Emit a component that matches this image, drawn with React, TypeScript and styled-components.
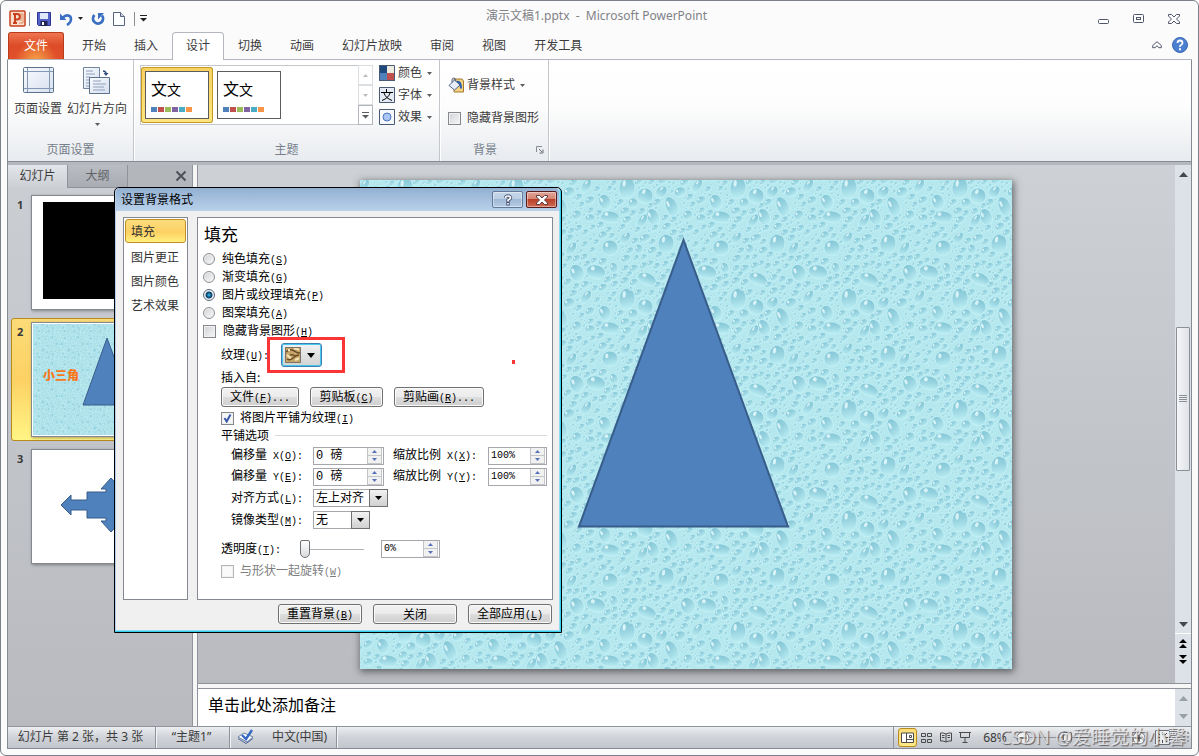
import React from "react";
import styled, { createGlobalStyle, css } from "styled-components";

const ui = `"Noto Sans", "Noto Sans CJK SC", sans-serif`;
const cjk = `"Noto Sans CJK SC", sans-serif`;
const song = `"Liberation Mono", "Noto Sans CJK SC", monospace`;

const Global = createGlobalStyle`
  *, *::before, *::after { box-sizing: border-box; }
  body { margin: 0; background: #fff; font: 12px/16px ${ui}; color: #3b3b3b; }
  button, input, select { font: inherit; color: inherit; margin: 0; }
  button { background: none; border: 0; padding: 0; }
  svg { display: block; flex: none; }
`;

/* ---------- window frame ---------- */

const Window = styled.div`
  position: relative;
  display: flex;
  flex-direction: column;
  min-height: 100vh;
  padding: 0 6px 6px;
  border: 1px solid #7c8089;
  border-radius: 6px;
  background: #fbfbfc;
  overflow: hidden;
`;

const TitleBar = styled.header`
  display: grid;
  grid-template-columns: 1fr auto 1fr;
  align-items: center;
  height: 31px;
  padding: 4px 8px 0 2px;
`;

const QuickBar = styled.div`
  display: flex;
  align-items: center;
  gap: 3px;
`;

const IconButton = styled.button<{ $w?: number }>`
  display: flex;
  align-items: center;
  justify-content: center;
  width: ${(p) => p.$w ?? 20}px;
  height: 20px;
`;

const Rule = styled.span`
  width: 1px;
  height: 14px;
  background: #8a8d92;
`;

const Caption = styled.h1`
  margin: 0;
  padding-bottom: 6px;
  font: 12px/16px ${ui};
  color: #7f8287;
  white-space: pre;
`;

const WindowButtons = styled.div`
  display: flex;
  justify-content: flex-end;
  gap: 15px;
`;

const TabRow = styled.nav`
  display: flex;
  align-items: stretch;
  height: 28px;
  padding-left: 1px;
  box-shadow: inset 0 -1px #b3b6bc;
`;

const FileTab = styled.button`
  width: 56px;
  height: 27px;
  margin-right: 4px;
  border: 1px solid #b93a1d;
  border-bottom: 0;
  border-radius: 3px 3px 0 0;
  background: radial-gradient(ellipse at 50% 110%, #f5a548 0, rgba(240, 130, 60, 0) 55%),
    linear-gradient(#ee7650, #dd4a27 50%, #e2512b);
  color: #fff;
`;

const Tab = styled.button<{ $on?: boolean }>`
  padding: 0 13px 2px;
  border: 1px solid transparent;
  border-bottom: 0;
  ${(p) =>
    p.$on &&
    css`
      border-color: #b3b6bc;
      border-radius: 4px 4px 0 0;
      background: #fff;
    `}
`;

const TabTools = styled.div`
  display: flex;
  align-items: center;
  gap: 5px;
  margin-left: auto;
  padding: 0 4px 2px 0;
`;

const Frame = styled.div`
  flex: 1;
  display: flex;
  flex-direction: column;
  border: 1px solid #868b93;
  border-top: 0;
`;

/* ---------- ribbon ---------- */

const Ribbon = styled.section`
  display: flex;
  height: 102px;
  border-bottom: 1px solid #868b93;
  background: linear-gradient(#fff, #fdfdfd 45%, #e8ebef);
`;

const Group = styled.div<{ $w: number }>`
  display: grid;
  grid-template-rows: 79px 22px;
  width: ${(p) => p.$w}px;
  border-right: 1px solid #c3c6cb;
  box-shadow: 1px 0 #fff;
`;

const GroupName = styled.div<{ $launch?: boolean }>`
  position: relative;
  display: flex;
  align-items: center;
  justify-content: center;
  padding-right: ${(p) => (p.$launch ? 18 : 0)}px;
  color: #767f8c;
`;

const Launcher = styled.button`
  position: absolute;
  right: 4px;
  top: 7px;
`;

const GroupBody = styled.div<{ $pad?: string; $gap?: number }>`
  display: flex;
  gap: ${(p) => p.$gap ?? 0}px;
  padding: ${(p) => p.$pad ?? "5px"};
`;

const BigButton = styled.button`
  display: flex;
  flex-direction: column;
  align-items: center;
  justify-content: flex-start;
  gap: 6px;
  line-height: 16px;
  white-space: nowrap;
`;

const Stack = styled.div<{ $gap?: number }>`
  display: flex;
  flex-direction: column;
  gap: ${(p) => p.$gap ?? 6}px;
`;

const SmallButton = styled.button`
  display: flex;
  align-items: center;
  gap: 3px;
  height: 16px;
  line-height: 16px;
  white-space: nowrap;
  & > svg:last-child { margin-left: 2px; }
`;

const Gallery = styled.div`
  display: flex;
  width: 233px;
  height: 60px;
  border: 1px solid #c4c7cc;
  background: #fff;
`;

const Theme = styled.button<{ $on?: boolean }>`
  display: flex;
  flex-direction: column;
  width: 72px;
  height: 56px;
  margin-top: 1px;
  padding: 4px;
  border-radius: 3px;
  ${(p) =>
    p.$on &&
    css`
      box-shadow: inset 0 0 0 1px #c29b2b;
      background: linear-gradient(#f8d160, #ffe57e);
    `}
`;

const ThemeCard = styled.span`
  display: flex;
  flex-direction: column;
  justify-content: flex-end;
  gap: 8px;
  width: 64px;
  height: 48px;
  padding: 0 5px 6px;
  border: 1px solid #5c5c5c;
  background: #fff;
  color: #000;
  text-align: left;
  font-size: 16px;
  line-height: 18px;
`;

const SmallGlyph = styled.span`
  font-size: 14px;
`;

const Swatches = styled.span`
  display: flex;
  gap: 1px;
`;

const Swatch = styled.i<{ $c: string }>`
  width: 6px;
  height: 5px;
  background: ${(p) => p.$c};
`;

const GallerySide = styled.div`
  display: flex;
  flex-direction: column;
  width: 15px;
  margin: -1px -1px -1px auto;
`;

const GalleryStep = styled.button<{ $on?: boolean }>`
  flex: 1;
  display: flex;
  align-items: center;
  justify-content: center;
  border: 1px solid ${(p) => (p.$on ? "#b3b7bd" : "#dcdfe2")};
`;

const RibbonCheck = styled.label`
  display: flex;
  align-items: center;
  gap: 6px;
  height: 16px;
  white-space: nowrap;
`;

/* ---------- form parts ---------- */

const Check = styled.input`
  appearance: none;
  flex: none;
  width: 13px;
  height: 13px;
  border: 1px solid #85898e;
  background: linear-gradient(135deg, #d0d2d5, #f7f7f8);
  box-shadow: inset 0 0 0 1px #f1f1f1;
  &:checked {
    background: #f4f6f8
      url("data:image/svg+xml,%3Csvg xmlns='http://www.w3.org/2000/svg' width='11' height='11'%3E%3Cpath d='M2.5 5l2.200 3.500L8.500 1.500' fill='none' stroke='%233a58a8' stroke-width='2'/%3E%3C/svg%3E");
  }
  &:disabled { border-color: #b4b6b8; background: #fafafa; }
`;

const Radio = styled.input`
  appearance: none;
  flex: none;
  width: 12px;
  height: 12px;
  border: 1px solid #8b8f94;
  border-radius: 50%;
  background: linear-gradient(135deg, #cfd1d4, #fafafa);
  box-shadow: inset 0 0 0 1px #f0f0f0;
  &:checked {
    border-color: #5a6b7d;
    background: radial-gradient(circle at 50% 50%, #46c3f0 0, #0f5e8f 2px, #123c5c 3px, #eef3f6 4px);
  }
`;

/* ---------- workspace ---------- */

const Workspace = styled.main`
  flex: 1;
  display: flex;
  border-top: 3px solid #b4b7bc;
`;

const Pane = styled.aside`
  width: 184px;
  background: linear-gradient(#cbced3, #b8babf);
`;

const PaneTabs = styled.div`
  display: flex;
  height: 23px;
  border-bottom: 1px solid #8f949c;
  background: #b3b6bb;
`;

const PaneTab = styled.button<{ $on?: boolean }>`
  width: 60px;
  height: ${(p) => (p.$on ? 23 : 22)}px;
  padding-bottom: 1px;
  border-right: 1px solid #8f949c;
  background: ${(p) => (p.$on ? "linear-gradient(#e2e5e9, #cbced3)" : "linear-gradient(#b9bcc1, #a9acb2)")};
  color: ${(p) => (p.$on ? "#3b3b3b" : "#5e6268")};
`;

const PaneClose = styled.button`
  margin: 0 5px 0 auto;
`;

const ThumbList = styled.ol`
  display: flex;
  flex-direction: column;
  gap: 4px;
  margin: 0;
  padding: 3px 3px 0;
  list-style: none;
`;

const ThumbItem = styled.li<{ $on?: boolean }>`
  display: grid;
  grid-template-columns: 16px auto;
  padding: 3px;
  height: 123px;
  border: 1px solid transparent;
  border-radius: 3px;
  font-weight: bold;
  font-size: 11px;
  line-height: 20px;
  & > span { padding-left: 2px; }
  & > svg { border: 1px solid #84888f; background: #fff; box-shadow: 1px 1px 3px rgba(0, 0, 0, 0.35); }
  ${(p) =>
    p.$on &&
    css`
      border-color: #b98a1c;
      background: linear-gradient(#fbdc78, #fdd164 50%, #fff585);
    `}
`;

const Splitter = styled.div`
  width: 6px;
  border: solid #8f949c;
  border-width: 0 1px;
  background: #f6f6f7;
`;

const Editor = styled.div`
  flex: 1;
  display: flex;
  flex-direction: column;
`;

const StageRow = styled.div`
  flex: 1;
  display: flex;
  background: linear-gradient(#cdd0d4, #b9bbc0);
`;

const Stage = styled.div`
  flex: 1;
  display: flex;
  align-items: center;
  justify-content: center;
  padding-right: 2px;
  & > svg { box-shadow: 1px 2px 7px 1px rgba(60, 62, 66, 0.7); }
`;

const ScrollColumn = styled.div`
  display: flex;
  flex-direction: column;
  width: 16px;
  background: #dde1e8;
`;

const ScrollButton = styled.button<{ $h?: number }>`
  display: flex;
  align-items: center;
  justify-content: center;
  height: ${(p) => p.$h ?? 18}px;
`;

const ScrollTrack = styled.div`
  flex: 1;
  display: flex;
  flex-direction: column;
  justify-content: center;
  padding: 0 1px;
`;

const ScrollThumb = styled.div`
  display: flex;
  align-items: center;
  justify-content: center;
  height: 144px;
  border: 1px solid #8a8f98;
  border-radius: 1px;
  background: linear-gradient(90deg, #f5f6f8, #dfe2e7);
`;

const PageButtons = styled.div`
  display: flex;
  flex-direction: column;
  height: 50px;
  border-top: 1px solid #fff;
`;

const RowSplitter = styled.div`
  height: 6px;
  border: solid #8f949c;
  border-width: 1px 0;
  background: #f6f6f7;
`;

const Notes = styled.div`
  display: flex;
  height: 37px;
  background: #fff;
  color: #000;
`;

const NotesText = styled.p`
  flex: 1;
  margin: 0;
  padding: 5px 10px;
  font-size: 16px;
  line-height: 22px;
`;

/* ---------- status bar ---------- */

const StatusBar = styled.footer`
  display: flex;
  align-items: center;
  height: 22px;
  border-top: 1px solid #8f949c;
  background: linear-gradient(#eceef0, #cfd2d7 50%, #c3c6cc);
`;

const StatusItem = styled.button<{ $w: number }>`
  display: flex;
  align-items: center;
  justify-content: center;
  gap: 17px;
  width: ${(p) => p.$w}px;
  height: 21px;
  padding: 0 2px 2px 0;
  border-right: 1px solid #8f949c;
  box-shadow: 1px 0 #f2f3f5;
  white-space: nowrap;
`;

const StatusTools = styled.div`
  display: flex;
  align-items: center;
  height: 21px;
  margin-left: auto;
  padding: 0 1px 0 4px;
  border-left: 1px solid #8f949c;
`;

const ViewButton = styled.button<{ $on?: boolean }>`
  display: flex;
  align-items: center;
  justify-content: center;
  width: 19px;
  height: 19px;
  border-radius: 3px;
  ${(p) =>
    p.$on &&
    css`
      border: 1px solid #b98a1c;
      background: linear-gradient(#fbdc78, #ffe987);
    `}
`;

const ZoomText = styled.button`
  width: 42px;
  text-align: center;
`;

const ZoomRange = styled.input`
  appearance: none;
  width: 102px;
  height: 14px;
  background: linear-gradient(#8f949c, #8f949c) center / 100% 1px no-repeat;
  &::-webkit-slider-thumb {
    appearance: none;
    width: 9px;
    height: 12px;
    border: 1px solid #74787e;
    border-radius: 1px 1px 4px 4px;
    background: #f2f3f4;
  }
`;

const Watermark = styled.div`
  position: absolute;
  right: 12px;
  bottom: 4px;
  color: rgba(240, 240, 242, 0.75);
  font: 19px/28px ${ui};
  text-shadow: 1px 1px 1px rgba(70, 70, 74, 0.8);
  pointer-events: none;
  white-space: nowrap;
`;

/* ---------- dialog ---------- */

const Dialog = styled.section`
  position: absolute;
  left: 113px;
  top: 186px;
  width: 448px;
  border: 1px solid #000;
  border-radius: 5px 5px 0 0;
  background: #f0f0f0;
  box-shadow: inset -1px -1px #35cdee, inset -2px -2px #8fdcf0, inset 1px 0 #b4d0ee;
  color: #000;
  font: 12px/16px ${cjk};
`;

const DialogTitle = styled.header`
  display: flex;
  align-items: flex-start;
  gap: 3px;
  height: 23px;
  margin: 0 2px 0 1px;
  padding: 3px 2px 0 5px;
  border-radius: 4px 4px 0 0;
  background: linear-gradient(#93b0d2, #b9d1ea);
  & > h2 { flex: 1; margin: 0; font: 12px/18px ${ui}; }
`;

const DialogButton = styled.button<{ $danger?: boolean }>`
  display: flex;
  align-items: center;
  justify-content: center;
  width: 31px;
  height: 17px;
  border: 1px solid ${(p) => (p.$danger ? "#5b1a1c" : "#63799a")};
  border-radius: 2px;
  background: ${(p) =>
    p.$danger
      ? "linear-gradient(#e2a598, #d68471 48%, #b9402a 50%, #cf6a52)"
      : "linear-gradient(#c6d7ea, #bacee4 48%, #9fb8d4 50%, #b7cde6)"};
  box-shadow: inset 0 0 0 1px rgba(255, 255, 255, 0.4);
`;

const DialogBody = styled.div`
  display: grid;
  grid-template-columns: 65px 1fr;
  gap: 9px;
  height: 383px;
  margin: 6px 8px 0;
`;

const Categories = styled.ul`
  display: flex;
  flex-direction: column;
  margin: 0;
  padding: 1px;
  border: 1px solid #858992;
  background: #fff;
  list-style: none;
`;

const Category = styled.button<{ $on?: boolean }>`
  width: 61px;
  height: 24px;
  padding-left: 5px;
  border: 1px solid transparent;
  border-radius: 3px;
  text-align: left;
  color: #333;
  ${(p) =>
    p.$on &&
    css`
      margin-bottom: 2px;
      border-color: #c2902a;
      background: linear-gradient(#fbdc7c, #fdd164 55%, #fff07e);
    `}
`;

const Panel = styled.form`
  position: relative;
  padding-left: 5px;
  border: 1px solid #858992;
  background: #fff;
  & > h3 { margin: 0; padding-left: 1px; height: 32px; font: 17px/34px ${ui}; }
`;

const Option = styled.label<{ $dim?: boolean; $in?: boolean; $h?: number }>`
  display: flex;
  align-items: center;
  gap: ${(p) => (p.$in ? 6 : 7)}px;
  height: ${(p) => p.$h ?? 18}px;
  padding-left: ${(p) => (p.$in ? 18 : 0)}px;
  color: ${(p) => (p.$dim ? "#7d7d7d" : "inherit")};
`;

const Line = styled.div<{ $h: number; $gap?: number; $in?: number }>`
  display: flex;
  align-items: center;
  gap: ${(p) => p.$gap ?? 0}px;
  height: ${(p) => p.$h}px;
  padding-left: ${(p) => p.$in ?? 18}px;
`;

const Legend = styled.div`
  display: flex;
  align-items: center;
  gap: 6px;
  height: 18px;
  margin-bottom: 1px;
  padding: 0 5px 0 18px;
  &::after { content: ""; flex: 1; height: 1px; background: #d5dadf; }
`;

const Mnemonic = styled.span`
  font-family: ${song};
  font-size: 10px;
`;

const TextureButton = styled.button`
  display: flex;
  align-items: center;
  gap: 6px;
  width: 41px;
  height: 24px;
  padding: 0 3px;
  border: 1px solid #3c7fb1;
  border-radius: 3px;
  background: linear-gradient(#f2f2f2, #d2d2d2);
  box-shadow: inset 0 0 0 1px #46c8f0;
`;

const Push = styled.button<{ $w: number }>`
  width: ${(p) => p.$w}px;
  height: 20px;
  border: 1px solid #707070;
  border-radius: 3px;
  background: linear-gradient(#f2f2f2, #ebebeb 48%, #dddddd 50%, #cfcfcf);
  box-shadow: inset 0 0 0 1px #fafafa;
  line-height: 16px;
  white-space: nowrap;
`;

const FieldLabel = styled.label<{ $w: number }>`
  width: ${(p) => p.$w}px;
  white-space: pre;
`;

const SpinBox = styled.span<{ $w: number }>`
  display: flex;
  width: ${(p) => p.$w}px;
  height: 18px;
  padding-right: 1px;
  border: 1px solid #a5a7ad;
  background: #fff;
`;

const SpinInput = styled.input<{ $small?: boolean }>`
  flex: 1;
  min-width: 0;
  padding: 0 0 0 2px;
  border: 0;
  background: none;
  font: ${(p) => (p.$small ? 10 : 12)}px/16px ${song};
`;

const SpinArrows = styled.span`
  display: flex;
  flex-direction: column;
  width: 15px;
`;

const SpinArrow = styled.button`
  flex: 1;
  display: flex;
  align-items: center;
  justify-content: center;
  border: solid #c3c5c9;
  border-width: 0 1px 1px;
  background: #f1f1f2;
`;

const SelectBox = styled.span<{ $w: number }>`
  position: relative;
  display: block;
  width: ${(p) => p.$w}px;
  height: 18px;
`;

const Select = styled.select`
  appearance: none;
  width: 100%;
  height: 18px;
  padding: 0 20px 0 2px;
  border: 1px solid #a5a7ad;
  border-radius: 0;
  background: #fff;
  font: 12px/16px ${ui};
`;

const SelectArrow = styled.span`
  position: absolute;
  right: 0;
  top: 0;
  display: flex;
  align-items: center;
  justify-content: center;
  width: 19px;
  height: 18px;
  border: 1px solid #707070;
  background: linear-gradient(#f2f2f2, #d0d0d0);
  pointer-events: none;
`;

const Range = styled.input`
  appearance: none;
  width: 64px;
  height: 20px;
  background: linear-gradient(#b0b3b6, #b0b3b6) center / 100% 1px no-repeat;
  &::-webkit-slider-thumb {
    appearance: none;
    width: 10px;
    height: 18px;
    border: 1px solid #6e7276;
    border-radius: 2px 2px 5px 5px;
    background: linear-gradient(#fff, #d8dadc);
  }
`;

const DialogFooter = styled.footer`
  display: flex;
  justify-content: flex-end;
  gap: 11px;
  padding: 4px 9px 8px;
`;

const Highlight = styled.div`
  position: absolute;
  left: 69px;
  top: 119px;
  width: 78px;
  height: 36px;
  border: 3px solid #fb3535;
  pointer-events: none;
`;

const Dot = styled.div`
  position: absolute;
  left: 314px;
  top: 142px;
  width: 3px;
  height: 4px;
  background: #fb3535;
`;

/* ---------- drawings ---------- */

type TriProps = { w?: number; h?: number; up?: boolean; c?: string };
const Tri = ({ w = 5, h = 3, up, c = "#5a5d61" }: TriProps) => (
  <svg width={w} height={h} viewBox={`0 0 ${w} ${h}`} aria-hidden>
    <path d={up ? `M0 ${h}H${w}L${w / 2} 0Z` : `M0 0H${w}L${w / 2} ${h}Z`} fill={c} />
  </svg>
);

type Drop = [number, number, number, number, number];
const TILE = 111;
const bigDrops: Drop[] = [
  [45, 8, 8, 11, 5], [63, 16, 8, 8, 30], [90, 27, 6, 11, -24], [28, 37, 10, 6, 8], [23, 22, 6, 8, -24],
  [71, 37, 6, 9, -24], [60, 41, 4, 8, 35], [84, 64, 8, 10, 10], [100, 69, 4, 8, 35], [28, 68, 8, 8, 0],
  [106, 93, 7, 9, -24], [14, 92, 10, 7, 15], [65, 99, 10, 6, 25], [4, 6, 4, 8, 35], [43, 58, 4, 7, 42],
  [79, 12, 5, 7, 45], [51, 23, 5, 5, 0], [21, 55, 5, 4, -20], [63, 58, 6, 4, -20], [57, 69, 4, 5, -20],
  [32, 88, 4, 6, -20], [106, 35, 5, 5, -20], [8, 38, 5, 4, 0], [98, 12, 6, 5, -20], [43, 31, 5, 4, -15],
];
const allDrops: Drop[] = (() => {
  const list = [...bigDrops];
  let seed = 7;
  const next = () => {
    seed = (seed * 16807) % 2147483647;
    return seed / 2147483647;
  };
  const gap = (a: number, b: number) => {
    const d = Math.abs(a - b);
    return Math.min(d, TILE - d);
  };
  for (let i = 0; i < 4000 && list.length < 260; i++) {
    const r = i < 1400 ? 3.1 + next() * 1.4 : 1 + next() * 1.1;
    const x = next() * TILE;
    const y = next() * TILE;
    const free = list.every((d) => Math.hypot(gap(x, d[0]), gap(y, d[1])) > r + (d[2] + d[3]) / 2 - 0.2);
    if (free) list.push([x, y, r * 1.15, r * 0.9, -25]);
  }
  return list;
})();

const Droplets = ({ id, scale = 1 }: { id: string; scale?: number }) => (
  <defs>
    <linearGradient id={`${id}-g`} x1="0" y1="0" x2="0.2" y2="1">
      <stop offset="0" stopColor="#7fc3d4" />
      <stop offset="0.5" stopColor="#96d2df" />
      <stop offset="1" stopColor="#b9ecf2" />
    </linearGradient>
    <pattern id={id} width={TILE} height={TILE} patternUnits="userSpaceOnUse" patternTransform={`scale(${scale})`}>
      <rect width={TILE} height={TILE} fill="#b4e7ee" />
      {allDrops.flatMap(([x, y, rx, ry, rot], i) =>
        [-TILE, 0, TILE].flatMap((dx) =>
          [-TILE, 0, TILE].map((dy) => {
            const cx = x + dx;
            const cy = y + dy;
            if (cx < -12 || cx > TILE + 12 || cy < -12 || cy > TILE + 12) return null;
            return (
              <g key={`${i}-${dx}-${dy}`} transform={`translate(${cx} ${cy}) rotate(${rot})`}>
                <ellipse rx={rx} ry={ry} fill={`url(#${id}-g)`} stroke="#c4f0f5" strokeWidth="0.8" />
                <ellipse cx={-rx * 0.4} cy={-ry * 0.4} rx={rx * 0.2} ry={ry * 0.3} fill="#dff8fb" opacity="0.9" />
              </g>
            );
          })
        )
      )}
    </pattern>
  </defs>
);

const AppIcon = () => (
  <svg width="17" height="17" viewBox="0 0 17 17" aria-hidden>
    <rect x="1" y="1" width="15" height="15" rx="1" fill="#fbdfcd" stroke="#c8401c" strokeWidth="1.500" />
    <path d="M10 4h4v9h-4M11 6h2M11 8h2M11 10h2" fill="none" stroke="#e08a62" />
    <path d="M6 13.500V4h2.200a2.700 2.700 0 0 1 0 5.400H6M4 13h4M4 4h3" fill="none" stroke="#c8401c" strokeWidth="2" />
  </svg>
);
const SaveIcon = () => (
  <svg width="14" height="14" viewBox="0 0 14 14" aria-hidden>
    <path d="M.5.500h13v13h-12l-1-1z" fill="#5560c8" stroke="#2c3590" />
    <path d="M3 1h8v6H3z" fill="#dfe8f8" />
    <path d="M3.500 9h7v5h-7z" fill="#20264f" />
    <path d="M5 10h2v3H5z" fill="#fff" />
  </svg>
);
const UndoIcon = () => (
  <svg width="15" height="14" viewBox="0 0 15 14" aria-hidden>
    <path d="M4 5.500C7 2 12 3 12 7c0 2.500-1.500 4.500-4 6" fill="none" stroke="#3a6fc4" strokeWidth="2.600" />
    <path d="M1 1.500V8h6.500z" fill="#3a6fc4" />
  </svg>
);
const RedoIcon = () => (
  <svg width="14" height="14" viewBox="0 0 14 14" aria-hidden>
    <path d="M3.500 3a5 5 0 1 0 7.500.5" fill="none" stroke="#3a6fc4" strokeWidth="2.800" />
    <path d="M7 1v6.500L13 1z" fill="#3a6fc4" />
  </svg>
);
const NewIcon = () => (
  <svg width="12" height="14" viewBox="0 0 12 14" aria-hidden>
    <path d="M.5.500h7l4 4v9H.500z" fill="#fdfeff" stroke="#56657d" />
    <path d="M7.500.500v4h4" fill="#c8d4e6" stroke="#56657d" />
  </svg>
);
const CustomizeIcon = ({ c = "#222" }: { c?: string }) => (
  <svg width="7" height="7" viewBox="0 0 7 7" aria-hidden>
    <path d="M0 .5h7" stroke={c} />
    <path d="M0 3h7L3.500 6.500z" fill={c} />
  </svg>
);
const PageSetupIcon = () => (
  <svg width="31" height="28" viewBox="0 0 31 28" aria-hidden>
    <defs>
      <linearGradient id="sheet" x1="0" y1="0" x2="1" y2="1">
        <stop offset="0" stopColor="#f8fafd" />
        <stop offset="1" stopColor="#d7e1f1" />
      </linearGradient>
    </defs>
    <rect x=".5" y=".5" width="30" height="25" rx="1" fill="url(#sheet)" stroke="#5d7189" />
    <path d="M4.500 1v24M26.500 1v24M1 4.500h29M1 21.500h29" stroke="#8497b3" />
  </svg>
);
const OrientationIcon = () => (
  <svg width="28" height="28" viewBox="0 0 28 28" aria-hidden>
    <path d="M.5.500h16v21H.500z" fill="url(#sheet)" stroke="#7485a0" />
    <path d="M3 4h7M3 7h9M3 10h4M3 13h3M3 16h3M3 19h3" stroke="#8fa0ba" />
    <path d="M6.500 10.500h20v16h-20z" fill="url(#sheet)" stroke="#5d7189" />
    <path d="M10 14h8M10 17h13M10 20h11M10 23h12" stroke="#8fa0ba" />
    <path d="M20 4q3 0 3 3" fill="none" stroke="#2d4f80" strokeWidth="1.500" />
    <path d="M20.500 6h5L23 9z" fill="#2d4f80" />
  </svg>
);
const ColorsIcon = () => (
  <svg width="16" height="16" viewBox="0 0 16 16" aria-hidden>
    <path d="M0 0h8v8H0z" fill="#1f497d" />
    <path d="M8 0h8v8H8z" fill="#eeece1" />
    <path d="M0 8h8v8H0z" fill="#4f81bd" />
    <path d="M8 8h8v8H8z" fill="#c0504d" />
    <path d="M.5.500h15v15H.500z" fill="none" stroke="#4b5a73" />
  </svg>
);
const FontsIcon = () => (
  <svg width="16" height="16" viewBox="0 0 16 16" aria-hidden>
    <path d="M.5.500h15v15H.500z" fill="#e4ebf5" stroke="#4b5a73" />
    <path d="M7.500 2v3M2 5.500h12M5 6q1.500 5 8 7.500M11 6q-1.500 5-8 7.500" fill="none" stroke="#000" />
  </svg>
);
const EffectsIcon = () => (
  <svg width="16" height="16" viewBox="0 0 16 16" aria-hidden>
    <path d="M.5.500h15v15H.500z" fill="#f6f8fb" stroke="#4b5a73" />
    <circle cx="8" cy="8" r="4" fill="#a9c6f2" stroke="#4a78c0" />
  </svg>
);
const BucketIcon = () => (
  <svg width="16" height="16" viewBox="0 0 16 16" aria-hidden>
    <path d="M6 2h8l1.500 2v11H6z" fill="#f3d283" stroke="#a4782a" />
    <path d="M1 8.500L6.500 3l5.500 5-5.500 5z" fill="#e8eef8" stroke="#4d6487" />
    <path d="M4 5.500V3q0-2 2-2t2 3.500" fill="none" stroke="#4d6487" />
    <path d="M9 5q4-1 4 6.500" fill="none" stroke="#2e5eae" strokeWidth="2" />
  </svg>
);
const LauncherIcon = () => (
  <svg width="8" height="8" viewBox="0 0 8 8" aria-hidden>
    <path d="M.5 6V.500H6" fill="none" stroke="#8a8e94" />
    <path d="M3 3l3 3M7 3.500V7H3.500" fill="none" stroke="#6b6f75" />
  </svg>
);
const MinIcon = () => (
  <svg width="12" height="12" viewBox="0 0 12 12" aria-hidden>
    <rect x=".5" y="6.500" width="10" height="4" rx="1" fill="#fff" stroke="#50566b" />
  </svg>
);
const MaxIcon = () => (
  <svg width="12" height="10" viewBox="0 0 12 10" aria-hidden>
    <rect x=".5" y=".5" width="10" height="8" rx="1" fill="#fff" stroke="#50566b" />
    <rect x="3.500" y="3.500" width="4" height="2" fill="none" stroke="#50566b" />
  </svg>
);
const CloseIcon = ({ fill = "#fff", stroke = "#50566b" }) => (
  <svg width="12" height="10" viewBox="0 0 12 10" aria-hidden>
    <path d="M.5.500h3L6 3 8.500.500h3V2L8.500 5l3 3v1.500h-3L6 7 3.500 9.500h-3V8l3-3-3-3z" fill={fill} stroke={stroke} />
  </svg>
);
const CollapseIcon = () => (
  <svg width="10" height="8" viewBox="0 0 10 8" aria-hidden>
    <path d="M5 .7L9.300 4.500v2.200H7L5 4.800 3 6.700H.7V4.500z" fill="#fff" stroke="#50566b" />
  </svg>
);
const HelpIcon = () => (
  <svg width="16" height="16" viewBox="0 0 16 16" aria-hidden>
    <circle cx="8" cy="8" r="7.500" fill="#4a80cf" stroke="#3a68b4" />
    <path d="M5.500 6q0-2.500 2.500-2.500T10.500 6Q10.500 7.200 9 8T8 10" fill="none" stroke="#fff" strokeWidth="1.800" />
    <path d="M7 11.200h2v2H7z" fill="#fff" />
  </svg>
);
const QuestionIcon = () => (
  <svg width="10" height="12" viewBox="0 0 10 12" aria-hidden>
    <path d="M2.500 4Q2.500 2 5 2t2.500 2Q7.500 5 5 6V8" fill="none" stroke="#4a5674" strokeWidth="3.400" />
    <path d="M3.300 8h3.400v3.500H3.300z" fill="#4a5674" />
    <path d="M2.500 4Q2.500 2 5 2t2.500 2Q7.500 5 5 6V7.500" fill="none" stroke="#fff" strokeWidth="1.700" />
    <path d="M4.200 9h1.600v1.600H4.200z" fill="#fff" />
  </svg>
);
const PaneCloseIcon = () => (
  <svg width="12" height="12" viewBox="0 0 12 12" aria-hidden>
    <path d="M1.500 1.500l9 9M10.500 1.500l-9 9" stroke="#4e5258" strokeWidth="2" />
  </svg>
);
const SandIcon = () => (
  <svg width="16" height="16" viewBox="0 0 16 16" aria-hidden>
    <path d="M0 0h16v16H0z" fill="#c7a468" />
    <path d="M1 5q3-3 6-2t4 2 4 1M2 12q3 2 6-1t6-3M5 8q3-1 5 1" fill="none" stroke="#6a4e2a" strokeWidth="1.500" />
    <path d="M9 2q3-1 5 1M2 8q2 2 4 3M10 13q3-1 4-2M3 3h2" fill="none" stroke="#f3e4bb" strokeWidth="2" />
    <path d="M.5.500h15v15H.500z" fill="none" stroke="#7a7468" />
  </svg>
);
const SpellIcon = () => (
  <svg width="18" height="15" viewBox="0 0 18 15" aria-hidden>
    <path d="M1 8l6-4 9 4-6 5z" fill="#fff" stroke="#6b82a8" />
    <path d="M1 9.500l8 5 7-5" fill="none" stroke="#4c6796" />
    <path d="M5 6l4 4 6-9" fill="none" stroke="#3568c4" strokeWidth="2.400" />
  </svg>
);
const NormalViewIcon = () => (
  <svg width="13" height="12" viewBox="0 0 13 12" aria-hidden>
    <path d="M.5 1h12v9.500H.500zM5.500 1v9.500M5.500 7.500h7" fill="#fff" stroke="#4b4b4b" />
    <path d="M8.500 3.500h2v2h-2z" fill="none" stroke="#4b4b4b" />
  </svg>
);
const SorterIcon = () => (
  <svg width="11" height="10" viewBox="0 0 11 10" aria-hidden>
    <path d="M.5.500h4v3h-4zM6.500.500h4v3h-4zM.5 6.500h4v3h-4zM6.500 6.500h4v3h-4z" fill="none" stroke="#4b4b4b" />
  </svg>
);
const ReadIcon = () => (
  <svg width="12" height="11" viewBox="0 0 12 11" aria-hidden>
    <path d="M6 2Q3 .5.500 1v8Q3 8.500 6 10q3-1.500 5.500-1V1Q9 .5 6 2v8M2 3.500h2.500M2 5.500h2.500M7.500 3.500H10M7.500 5.500H10" fill="none" stroke="#4b4b4b" />
  </svg>
);
const ShowIcon = () => (
  <svg width="12" height="11" viewBox="0 0 12 11" aria-hidden>
    <path d="M0 .5h12M1.500 1v4.500h9V1M6 6v4M3.500 10.500h5" fill="none" stroke="#4b4b4b" />
  </svg>
);
const RoundSign = ({ plus }: { plus?: boolean }) => (
  <svg width="14" height="14" viewBox="0 0 14 14" aria-hidden>
    <circle cx="7" cy="7" r="6" fill="#f3f4f5" stroke="#74787e" />
    <path d={plus ? "M3.500 7h7M7 3.500v7" : "M3.500 7h7"} stroke="#4b4b4b" strokeWidth="1.500" />
  </svg>
);
const FitIcon = () => (
  <svg width="15" height="15" viewBox="0 0 15 15" aria-hidden>
    <path d="M.5.500h14v14H.500z" fill="#eceef0" stroke="#6a6e74" />
    <path d="M7.500 2v3M7.500 10v3M2 7.500h3M10 7.500h3M3 3l2 2M12 3l-2 2M3 12l2-2M12 12l-2-2" stroke="#4b4b4b" />
  </svg>
);
const GripIcon = () => (
  <svg width="11" height="11" viewBox="0 0 11 11" aria-hidden>
    <path d="M8 0h2v2H8zM8 4h2v2H8zM4 4h2v2H4zM8 8h2v2H8zM4 8h2v2H4zM0 8h2v2H0z" fill="#969ba4" />
  </svg>
);
const DoubleTri = ({ up }: { up?: boolean }) => (
  <svg width="8" height="9" viewBox="0 0 8 9" aria-hidden>
    <path d={up ? "M0 4h8L4 0zM0 9h8L4 5z" : "M0 0h8L4 4zM0 5h8L4 9z"} fill="#000" />
  </svg>
);

/* ---------- composed parts ---------- */

const Key = ({ k, pre = "", post = "" }: { k: string; pre?: string; post?: string }) => (
  <Mnemonic>
    {pre}(<u>{k}</u>){post}
  </Mnemonic>
);

const Spin = ({ id, value, w, small, label }: { id: string; value: string; w: number; small?: boolean; label?: string }) => (
  <SpinBox $w={w}>
    <SpinInput id={id} defaultValue={value} $small={small} aria-label={label} />
    <SpinArrows>
      <SpinArrow type="button" aria-label="增加"><Tri up c="#5572b8" /></SpinArrow>
      <SpinArrow type="button" aria-label="减少"><Tri c="#5572b8" /></SpinArrow>
    </SpinArrows>
  </SpinBox>
);

const Combo = ({ id, value, w }: { id: string; value: string; w: number }) => (
  <SelectBox $w={w}>
    <Select id={id} defaultValue={value}><option>{value}</option></Select>
    <SelectArrow><Tri w={7} h={4} c="#000" /></SelectArrow>
  </SelectBox>
);

const accents = ["#4f81bd", "#c0504d", "#9bbb59", "#8064a2", "#4bacc6", "#f79646"];
const ThemeChoice = ({ on }: { on?: boolean }) => (
  <Theme $on={on}>
    <ThemeCard>
      <span>文<SmallGlyph>文</SmallGlyph></span>
      <Swatches>{accents.map((c) => <Swatch key={c} $c={c} />)}</Swatches>
    </ThemeCard>
  </Theme>
);

const tabs = ["开始", "插入", "设计", "切换", "动画", "幻灯片放映", "审阅", "视图", "开发工具"];

const FormatDialog = () => (
  <Dialog role="dialog" aria-label="设置背景格式">
    <DialogTitle>
      <h2>设置背景格式</h2>
      <DialogButton aria-label="帮助"><QuestionIcon /></DialogButton>
      <DialogButton $danger aria-label="关闭"><CloseIcon stroke="#5b3a40" /></DialogButton>
    </DialogTitle>
    <DialogBody>
      <Categories>
        {["填充", "图片更正", "图片颜色", "艺术效果"].map((c, i) => (
          <li key={c}><Category $on={i === 0}>{c}</Category></li>
        ))}
      </Categories>
      <Panel>
        <h3>填充</h3>
        <Option><Radio type="radio" name="fill" /><span>纯色填充<Key k="S" /></span></Option>
        <Option><Radio type="radio" name="fill" /><span>渐变填充<Key k="G" /></span></Option>
        <Option><Radio type="radio" name="fill" defaultChecked /><span>图片或纹理填充<Key k="P" /></span></Option>
        <Option><Radio type="radio" name="fill" /><span>图案填充<Key k="A" /></span></Option>
        <Option><Check type="checkbox" /><span>隐藏背景图形<Key k="H" /></span></Option>
        <Line $h={30}>
          <FieldLabel $w={60} htmlFor="texture">纹理<Key k="U" post=":" /></FieldLabel>
          <TextureButton id="texture" type="button"><SandIcon /><Tri w={8} h={5} c="#000" /></TextureButton>
        </Line>
        <Line $h={14}>插入自:</Line>
        <Line $h={26} $gap={11}>
          <Push type="button" $w={78}>文件<Key k="F" post="..." /></Push>
          <Push type="button" $w={73}>剪贴板<Key k="C" /></Push>
          <Push type="button" $w={90}>剪贴画<Key k="R" post="..." /></Push>
        </Line>
        <Option $in $h={16}><Check type="checkbox" defaultChecked /><span>将图片平铺为纹理<Key k="I" /></span></Option>
        <Legend>平铺选项</Legend>
        <Line $h={21} $in={28}>
          <FieldLabel $w={82} htmlFor="ox">偏移量<Key pre=" X" k="O" post=":" /></FieldLabel>
          <Spin id="ox" value="0 磅" w={71} />
          <Line $h={21} $in={9}>
            <FieldLabel $w={95} htmlFor="sx">缩放比例<Key pre=" X" k="X" post=":" /></FieldLabel>
            <Spin id="sx" value="100%" w={59} small />
          </Line>
        </Line>
        <Line $h={21} $in={28}>
          <FieldLabel $w={82} htmlFor="oy">偏移量<Key pre=" Y" k="E" post=":" /></FieldLabel>
          <Spin id="oy" value="0 磅" w={71} />
          <Line $h={21} $in={9}>
            <FieldLabel $w={95} htmlFor="sy">缩放比例<Key pre=" Y" k="Y" post=":" /></FieldLabel>
            <Spin id="sy" value="100%" w={59} small />
          </Line>
        </Line>
        <Line $h={22} $in={28}>
          <FieldLabel $w={82} htmlFor="align">对齐方式<Key k="L" post=":" /></FieldLabel>
          <Combo id="align" value="左上对齐" w={75} />
        </Line>
        <Line $h={22} $in={28}>
          <FieldLabel $w={82} htmlFor="mirror">镜像类型<Key k="M" post=":" /></FieldLabel>
          <Combo id="mirror" value="无" w={57} />
        </Line>
        <Line $h={36}>
          <FieldLabel $w={79} htmlFor="alpha">透明度<Key k="T" post=":" /></FieldLabel>
          <Range type="range" id="alpha" defaultValue={0} />
          <Line $h={36} $in={17}><Spin id="alpha-value" label="透明度" value="0%" w={59} small /></Line>
        </Line>
        <Option $in $dim $h={8}><Check type="checkbox" disabled /><span>与形状一起旋转<Key k="W" /></span></Option>
        <Highlight />
        <Dot />
      </Panel>
    </DialogBody>
    <DialogFooter>
      <Push $w={84}>重置背景<Key k="B" /></Push>
      <Push $w={84}>关闭</Push>
      <Push $w={84}>全部应用<Key k="L" /></Push>
    </DialogFooter>
  </Dialog>
);

const SlidePane = () => (
  <Pane>
    <PaneTabs>
      <PaneTab $on>幻灯片</PaneTab>
      <PaneTab>大纲</PaneTab>
      <PaneClose aria-label="关闭窗格"><PaneCloseIcon /></PaneClose>
    </PaneTabs>
    <ThumbList>
      <ThumbItem>
        <span>1</span>
        <svg width="154" height="115" viewBox="0 0 152 113">
          <path d="M11 6h130v97H11z" />
        </svg>
      </ThumbItem>
      <ThumbItem $on>
        <span>2</span>
        <svg width="154" height="115" viewBox="0 0 152 113">
          <Droplets id="drops-small" scale={0.234} />
          <path d="M1 1h150v111H1z" fill="url(#drops-small)" />
          <path d="M75 15L51 82h49z" fill="#4f81bd" stroke="#385d8a" />
          <text x="11" y="57" fontSize="12" fontWeight="900" fill="#f8781c" fontFamily={ui}>小三角</text>
        </svg>
      </ThumbItem>
      <ThumbItem>
        <span>3</span>
        <svg width="154" height="115" viewBox="0 0 152 113">
          <path
            d="M29 55l10-10v5h16v-8h19v-3h-5l10-11 10 11h-5v3h19v8h16v-5l10 10-10 10v-5h-16v8h-19v3h5l-10 11-10-11h5v-3h-19v-8h-16v5z"
            fill="#4f81bd"
            stroke="#385d8a"
          />
        </svg>
      </ThumbItem>
    </ThumbList>
  </Pane>
);

export default function App() {
  return (
    <Window>
      <Global />
      <TitleBar>
        <QuickBar>
          <AppIcon />
          <Rule />
          <IconButton $w={22} aria-label="保存"><SaveIcon /></IconButton>
          <IconButton $w={16} aria-label="撤消"><UndoIcon /></IconButton>
          <IconButton $w={7} aria-label="撤消列表"><Tri c="#222" /></IconButton>
          <IconButton $w={21} aria-label="恢复"><RedoIcon /></IconButton>
          <IconButton $w={15} aria-label="新建"><NewIcon /></IconButton>
          <IconButton $w={2} as="span" />
          <Rule />
          <IconButton $w={11} aria-label="自定义"><CustomizeIcon /></IconButton>
        </QuickBar>
        <Caption>{"演示文稿1.pptx  -  Microsoft PowerPoint"}</Caption>
        <WindowButtons>
          <IconButton aria-label="最小化"><MinIcon /></IconButton>
          <IconButton aria-label="还原"><MaxIcon /></IconButton>
          <IconButton aria-label="关闭"><CloseIcon /></IconButton>
        </WindowButtons>
      </TitleBar>
      <TabRow>
        <FileTab>文件</FileTab>
        {tabs.map((t) => <Tab key={t} $on={t === "设计"}>{t}</Tab>)}
        <TabTools>
          <IconButton aria-label="折叠功能区"><CollapseIcon /></IconButton>
          <IconButton $w={16} aria-label="帮助"><HelpIcon /></IconButton>
        </TabTools>
      </TabRow>
      <Frame>
        <Ribbon>
          <Group $w={126}>
            <GroupBody $gap={5} $pad="7px 6px 0">
              <BigButton><PageSetupIcon />页面设置</BigButton>
              <BigButton><OrientationIcon />幻灯片方向<Tri /></BigButton>
            </GroupBody>
            <GroupName>页面设置</GroupName>
          </Group>
          <Group $w={306}>
            <GroupBody $gap={6} $pad="5px 6px 0">
              <Gallery>
                <ThemeChoice on />
                <ThemeChoice />
                <GallerySide>
                  <GalleryStep aria-label="上一行"><Tri up c="#b9bcc0" /></GalleryStep>
                  <GalleryStep aria-label="下一行"><Tri c="#b9bcc0" /></GalleryStep>
                  <GalleryStep $on aria-label="其他"><CustomizeIcon c="#5a5d61" /></GalleryStep>
                </GallerySide>
              </Gallery>
              <Stack>
                <SmallButton><ColorsIcon />颜色<Tri /></SmallButton>
                <SmallButton><FontsIcon />字体<Tri /></SmallButton>
                <SmallButton><EffectsIcon />效果<Tri /></SmallButton>
              </Stack>
            </GroupBody>
            <GroupName>主题</GroupName>
          </Group>
          <Group $w={109}>
            <GroupBody $pad="17px 8px 0">
              <Stack $gap={17}>
                <SmallButton><BucketIcon />背景样式<Tri /></SmallButton>
                <RibbonCheck><Check type="checkbox" />隐藏背景图形</RibbonCheck>
              </Stack>
            </GroupBody>
            <GroupName $launch>
              背景
              <Launcher aria-label="设置背景格式"><LauncherIcon /></Launcher>
            </GroupName>
          </Group>
        </Ribbon>
        <Workspace>
          <SlidePane />
          <Splitter />
          <Editor>
            <StageRow>
              <Stage>
                <svg width="652" height="489" viewBox="0 0 652 489">
                  <Droplets id="drops" />
                  <path d="M0 0h652v489H0z" fill="url(#drops)" />
                  <path d="M323.500 60L219 346.500h209z" fill="#4f81bd" stroke="#385d8a" strokeWidth="2" />
                </svg>
              </Stage>
              <ScrollColumn>
                <ScrollButton aria-label="向上"><Tri up w={9} h={5} c="#44474b" /></ScrollButton>
                <ScrollTrack>
                  <ScrollThumb>
                    <svg width="8" height="8" viewBox="0 0 8 8" aria-hidden>
                      <path d="M0 .5h8M0 2.500h8M0 4.500h8M0 6.500h8" stroke="#8a8f98" />
                    </svg>
                  </ScrollThumb>
                </ScrollTrack>
                <ScrollButton aria-label="向下"><Tri w={9} h={5} c="#44474b" /></ScrollButton>
                <PageButtons>
                  <ScrollButton aria-label="上一张幻灯片"><DoubleTri up /></ScrollButton>
                  <ScrollButton $h={14} aria-label="下一张幻灯片"><DoubleTri /></ScrollButton>
                </PageButtons>
              </ScrollColumn>
            </StageRow>
            <RowSplitter />
            <Notes>
              <NotesText>单击此处添加备注</NotesText>
              <ScrollColumn>
                <ScrollButton aria-label="向上"><Tri up w={9} h={5} c="#97a3a3" /></ScrollButton>
                <ScrollButton aria-label="向下"><Tri w={9} h={5} c="#97a3a3" /></ScrollButton>
              </ScrollColumn>
            </Notes>
          </Editor>
        </Workspace>
        <StatusBar>
          <StatusItem $w={148}>幻灯片 第 2 张，共 3 张</StatusItem>
          <StatusItem $w={74}>“主题1”</StatusItem>
          <StatusItem $w={107}><SpellIcon />中文(中国)</StatusItem>
          <StatusTools>
            <ViewButton $on aria-label="普通视图"><NormalViewIcon /></ViewButton>
            <ViewButton aria-label="幻灯片浏览"><SorterIcon /></ViewButton>
            <ViewButton aria-label="阅读视图"><ReadIcon /></ViewButton>
            <ViewButton aria-label="幻灯片放映"><ShowIcon /></ViewButton>
            <ZoomText>68%</ZoomText>
            <IconButton $w={14} aria-label="缩小"><RoundSign /></IconButton>
            <ZoomRange type="range" aria-label="缩放" defaultValue={36} />
            <IconButton $w={14} aria-label="放大"><RoundSign plus /></IconButton>
            <IconButton $w={33} aria-label="适应窗口"><FitIcon /></IconButton>
            <GripIcon />
          </StatusTools>
        </StatusBar>
      </Frame>
      <FormatDialog />
      <Watermark>CSDN @爱睡觉的小馨</Watermark>
    </Window>
  );
}
